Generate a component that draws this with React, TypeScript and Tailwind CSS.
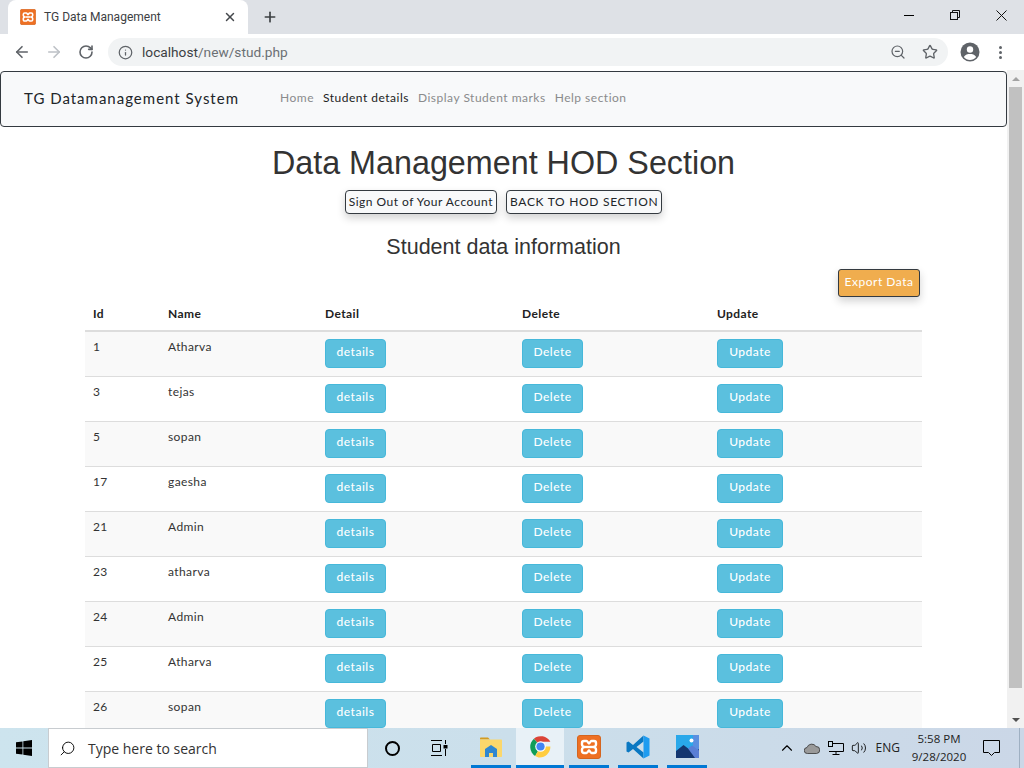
import { ArrowLeft, ArrowRight, RotateCw, Info, ZoomOut, Star, X, Plus, Search, ChevronUp, Volume2 } from 'lucide-react';

const students = [
  { id: 1, name: 'Atharva' },
  { id: 3, name: 'tejas' },
  { id: 5, name: 'sopan' },
  { id: 17, name: 'gaesha' },
  { id: 21, name: 'Admin' },
  { id: 23, name: 'atharva' },
  { id: 24, name: 'Admin' },
  { id: 25, name: 'Atharva' },
  { id: 26, name: 'sopan' },
];

function XamppIcon({ size }: { size: number }) {
  return (
    <svg width={size} height={size} viewBox="0 0 24 24" className="shrink-0">
      <rect x="0.5" y="0.5" width="23" height="23" rx="2.5" fill="#ee7023" stroke="#d4651f" strokeWidth="1" />
      <path d="M7 6h2.500c1 0 2 2.500 2.500 2.500S13.500 6 14.500 6H17c1.200 0 2 .8 2 2v1.500c0 1.500-1.500 2.500-3 2.500 1.500 0 3 1 3 2.500V16c0 1.200-.8 2-2 2h-2.500c-1 0-2-2.500-2.500-2.500S10.500 18 9.500 18H7c-1.200 0-2-.8-2-2v-1.500C5 13 6.500 12 8 12 6.500 12 5 11 5 9.500V8c0-1.200.8-2 2-2z" fill="none" stroke="#fff" strokeWidth="2.400" />
      <path d="M8 12h8" stroke="#fff" strokeWidth="2.400" />
    </svg>
  );
}

function ChromeBar() {
  return (
    <div className="h-[70px] shrink-0 flex flex-col bg-white">
      <div className="h-[34px] bg-[#dee1e6] flex items-end relative">
        <div className="ml-2 w-[240px] h-[34px] bg-white rounded-t-lg flex items-center pl-3 pr-[11px]">
          <XamppIcon size={16} />
          <span className="ml-2 text-xs text-[#3c4043] font-['Roboto',sans-serif] flex-1">TG Data Management</span>
          <X size={14} strokeWidth={2.5} className="text-[#45484c]" />
        </div>
        <Plus size={16} strokeWidth={2.5} className="ml-[14px] mb-[9px] text-[#3c4043]" />
        <div className="flex-1" />
        <div className="flex items-center h-[34px] pb-[4px]">
          <div className="w-[46px] flex justify-center"><div className="w-[10px] h-px bg-black" /></div>
          <div className="w-[46px] flex justify-center">
            <svg width="10" height="10" viewBox="0 0 10 10" fill="none" stroke="#111" strokeWidth="1">
              <rect x="0.500" y="2.500" width="7" height="7" />
              <path d="M2.500 2.500V.5h7v7H7.500" />
            </svg>
          </div>
          <div className="w-[46px] flex justify-center">
            <svg width="11" height="11" viewBox="0 0 11 11" stroke="#111" strokeWidth="1"><path d="M.5.5l10 10M10.500.5l-10 10" /></svg>
          </div>
        </div>
      </div>
      <div className="h-[36px] bg-white flex items-center">
        <ArrowLeft size={18} strokeWidth={2.2} className="ml-[13px] text-[#5f6368]" />
        <ArrowRight size={18} strokeWidth={2.2} className="ml-[14px] text-[#bdc1c6]" />
        <RotateCw size={16} strokeWidth={2.4} className="ml-[15px] text-[#5f6368]" />
        <div className="ml-[14px] w-[840px] h-[28px] bg-[#f1f3f4] rounded-full flex items-center pl-[10px] pr-[10px]">
          <Info size={15} strokeWidth={2} className="text-[#5f6368]" />
          <span className="ml-[9px] text-[13.7px] text-[#3c4043] font-['Roboto',sans-serif] flex-1">
            localhost<span className="text-[#6b6f73]">/new/stud.php</span>
          </span>
          <ZoomOut size={16} strokeWidth={1.8} className="text-[#5f6368]" />
          <Star size={16} strokeWidth={2} className="ml-[16px] text-[#5f6368]" />
        </div>
        <svg width="20" height="20" viewBox="0 0 20 20" className="ml-[12px]">
          <circle cx="10" cy="10" r="9.500" fill="#5f6368" />
          <circle cx="10" cy="7.500" r="3.200" fill="#fff" />
          <path d="M3.800 15c1.500-2.500 4-3 6.200-3s4.700.5 6.200 3c-1.500 2-3.800 3-6.200 3s-4.700-1-6.200-3z" fill="#fff" />
        </svg>
        <div className="ml-[19px] flex flex-col gap-[2px]">
          <div className="w-[3px] h-[3px] rounded-full bg-[#5f6368]" />
          <div className="w-[3px] h-[3px] rounded-full bg-[#5f6368]" />
          <div className="w-[3px] h-[3px] rounded-full bg-[#5f6368]" />
        </div>
      </div>
    </div>
  );
}

function Navbar() {
  return (
    <div className="h-[56px] mt-[1px] pb-[2px] bg-[#f8f9fa] border border-[#343a40] rounded-[4px] flex items-center pl-[23px] tracking-[0.5px]">
      <span className="text-[15px] text-[#212529] tracking-[1px]">TG Datamanagement System</span>
      <nav className="ml-[41px] flex gap-[9px] text-[12px]">
        <span className="text-[#8a8b8c]">Home</span>
        <span className="text-[#222]">Student details</span>
        <span className="text-[#8a8b8c]">Display Student marks</span>
        <span className="text-[#8a8b8c]">Help section</span>
      </nav>
    </div>
  );
}

function InfoBtn({ label, w }: { label: string; w: string }) {
  return (
    <button className={`${w} h-[29px] bg-[#5bc0de] border border-[#46b8da] rounded-[4px] text-[12px] font-medium text-white tracking-[0.5px] pb-[3px]`}>
      {label}
    </button>
  );
}

function StudentTable() {
  return (
    <table className="w-[837px] ml-[85px] table-fixed text-[12px] text-[#333] tracking-[0.4px]">
      <thead>
        <tr className="h-[32px] border-b-2 border-[#ddd] text-left font-bold">
          <th className="w-[75px] pl-2 pb-[1px] font-bold text-[#222]">Id</th>
          <th className="w-[157px] pl-2 pb-[1px] font-bold text-[#222]">Name</th>
          <th className="w-[197px] pl-2 pb-[1px] font-bold text-[#222]">Detail</th>
          <th className="w-[195px] pl-2 pb-[1px] font-bold text-[#222]">Delete</th>
          <th className="pl-2 pb-[1px] font-bold text-[#222]">Update</th>
        </tr>
      </thead>
      <tbody>
        {students.map((s, i) => (
          <tr key={i} className={`h-[45px] border-b border-[#ddd] align-top ${i % 2 === 0 ? 'bg-[#f9f9f9]' : 'bg-white'}`}>
            <td className="pl-2 pt-[6px]">{s.id}</td>
            <td className="pl-2 pt-[6px]">{s.name}</td>
            <td className="pl-2 pt-[7px]"><InfoBtn label="details" w="w-[61px]" /></td>
            <td className="pl-2 pt-[7px]"><InfoBtn label="Delete" w="w-[61px]" /></td>
            <td className="pl-2 pt-[7px]"><InfoBtn label="Update" w="w-[66px]" /></td>
          </tr>
        ))}
      </tbody>
    </table>
  );
}

function Scrollbar() {
  return (
    <div className="w-[17px] shrink-0 bg-[#f1f1f1] flex flex-col items-center">
      <div className="h-[17px] flex items-center justify-center">
        <div className="w-0 h-0 border-x-[4px] border-x-transparent border-b-[4px] border-b-[#a3a3a3]" />
      </div>
      <div className="w-[13px] h-[601px] bg-[#c1c1c1]" />
      <div className="flex-1" />
      <div className="h-[17px] flex items-center justify-center">
        <div className="w-0 h-0 border-x-[4px] border-x-transparent border-t-[4px] border-t-[#505050]" />
      </div>
    </div>
  );
}

function Taskbar() {
  const pinned = 'w-[40px] h-[40px] flex items-center justify-center border-b-[3px] border-[#0078d4]';
  return (
    <div className="h-[40px] shrink-0 flex items-stretch bg-gradient-to-r from-[#cde4ee] via-[#cbdfeb] to-[#cbd7e7] font-['Open_Sans',sans-serif]">
      <div className="w-[48px] flex items-center justify-center">
        <svg width="16" height="16" viewBox="0 0 16 16" fill="#000">
          <path d="M0 2.300l6.500-.9v6.200H0zM7.300 1.300L16 0v7.600H7.300zM0 8.400h6.500v6.200L0 13.700zM7.300 8.400H16V16l-8.700-1.200z" />
        </svg>
      </div>
      <div className="w-[320px] bg-white border border-[#c8ccd0] flex items-center pl-[10px]">
        <Search size={17} strokeWidth={1.3} className="text-black -scale-x-100" />
        <span className="ml-[12px] text-[14px] text-[#333]">Type here to search</span>
      </div>
      <div className="w-[48px] flex items-center justify-center">
        <div className="w-[15px] h-[15px] rounded-full border-[2px] border-black" />
      </div>
      <div className="w-[48px] flex items-center justify-center">
        <svg width="18" height="16" viewBox="0 0 18 16" fill="none" stroke="#000" strokeWidth="1">
          <path d="M0 .5h11M0 15.500h11M1.500 4.500h8v7h-8zM14.500 0v4M14.500 9v7" />
          <rect x="13" y="5.500" width="3" height="2.500" fill="#000" />
        </svg>
      </div>
      <div className="ml-[7px] flex">
        <div className={pinned}>
          <svg width="22" height="20" viewBox="0 0 22 20">
            <path d="M0 1.500C0 1 .4.500 1 .500h7l2 2h-10z" fill="#d39b21" />
            <path d="M0 2.500h21c.6 0 1 .4 1 1V19c0 .6-.4 1-1 1H1c-.6 0-1-.4-1-1z" fill="#fbd76b" />
            <path d="M5 12l6-4 6 4v8h-4v-4H9v4H5z" fill="#2f87d0" />
          </svg>
        </div>
        <div className="w-[48px] h-[40px] ml-[5px] flex items-center justify-center bg-[#e8f1f7] border-b-[3px] border-[#0078d4]">
          <svg width="23" height="23" viewBox="0 0 24 24">
            <path d="M12 12L5.100 3.800A11.500 11.500 0 0 1 22.300 7H12z" fill="#db4437" />
            <path d="M12 12l-5.500 10A11.500 11.500 0 0 1 5.100 3.800z" fill="#0f9d58" />
            <path d="M12 12h10.300a11.500 11.500 0 0 1-11.200 11.500H10L6.500 22z" fill="#ffcd40" />
            <circle cx="12" cy="12" r="5.500" fill="#fff" />
            <circle cx="12" cy="12" r="4.300" fill="#4285f4" />
          </svg>
        </div>
        <div className={`${pinned} ml-[5px]`}><XamppIcon size={24} /></div>
        <div className={`${pinned} ml-[9px]`}>
          <svg width="24" height="24" viewBox="0 0 24 24">
            <path d="M17.500.5L7 10 2.500 6.500.5 7.500v9l2 1L7 14l10.500 9.500v-6L10.500 12l7-5.500z" fill="#0a78c2" />
            <path d="M17.500.5l6 3v17l-6 3z" fill="#1f9cf0" />
          </svg>
        </div>
        <div className={`${pinned} ml-[9px]`}>
          <svg width="23" height="23" viewBox="0 0 23 23">
            <rect width="23" height="23" fill="#29a8ea" />
            <path d="M17 0h6v23h-6z" fill="#5a8fe0" />
            <circle cx="15.500" cy="5.500" r="2" fill="#fff" />
            <path d="M0 23V16l7.500-6L18 18l5-4v9z" fill="#14366f" />
            <path d="M12 13.500l4-3 7 5V23h-4z" fill="#5a7fd6" />
          </svg>
        </div>
      </div>
      <div className="flex-1" />
      <div className="flex items-center">
        <ChevronUp size={18} strokeWidth={1.5} className="text-black" />
        <svg width="16" height="11" viewBox="0 0 16 11" className="ml-[8px]">
          <path d="M3.500 10.500a3 3 0 0 1-.5-6A5 5 0 0 1 12 3.500a3.500 3.500 0 0 1 .5 7z" fill="#9a9a9a" stroke="#333" strokeWidth="0.8" />
        </svg>
        <svg width="16" height="14" viewBox="0 0 16 14" fill="none" stroke="#000" strokeWidth="1" className="ml-[8px]">
          <path d="M4 2.500h11.500v8H1M8 10.500v3M4.500 13.500h7" />
          <rect x="0.500" y="0.500" width="4" height="5" fill="#cbdfeb" />
        </svg>
        <Volume2 size={16} strokeWidth={1.3} className="ml-[7px] text-black" />
        <span className="ml-[9px] text-[12px] text-[#222]">ENG</span>
      </div>
      <div className="w-[72px] ml-[3px] mr-[1px] flex flex-col items-center justify-center text-[11.5px] leading-[18px] text-[#222]">
        <span>5:58 PM</span>
        <span>9/28/2020</span>
      </div>
      <div className="w-[48px] flex items-center pl-[7px] relative">
        <svg width="17" height="16" viewBox="0 0 17 16" fill="none" stroke="#000" strokeWidth="1">
          <path d="M.5.5h16v12h-5l-3 3-3-3h-5z" />
        </svg>
        <div className="absolute right-[4px] top-0 bottom-0 w-px bg-[#9fb0c2]" />
      </div>
    </div>
  );
}

export default function App() {
  return (
    <div className="w-[1024px] h-[768px] flex flex-col overflow-hidden bg-white">
      <ChromeBar />
      <div className="flex-1 min-h-0 flex">
        <div className="flex-1 min-w-0 overflow-hidden font-['Lato',sans-serif]">
          <Navbar />
          <h1 className="mt-[17px] text-center text-[32.3px] leading-[38px] text-[#333] font-['Liberation_Sans',sans-serif]">Data Management HOD Section</h1>
          <div className="mt-[8px] flex justify-center gap-[9px]">
            <button className="h-[24px] px-[3px] bg-[#f8f9fa] border border-[#343a40] rounded-[4px] text-[12px] text-[#212529] tracking-[0.5px] shadow-[0_4px_8px_rgba(0,0,0,0.18)] whitespace-nowrap">
              Sign Out of Your Account
            </button>
            <button className="h-[24px] px-[3px] bg-[#f8f9fa] border border-[#343a40] rounded-[4px] text-[12px] text-[#212529] tracking-[0.7px] shadow-[0_4px_8px_rgba(0,0,0,0.18)] whitespace-nowrap">
              BACK TO HOD SECTION
            </button>
          </div>
          <h2 className="mt-[20px] text-center text-[21.5px] leading-[26px] text-[#333] font-['Liberation_Sans',sans-serif]">Student data information</h2>
          <div className="mt-[9px] flex justify-end pr-[87px]">
            <button className="w-[82px] h-[28px] bg-[#f0ad4e] border border-[#343a40] rounded-[3px] text-[12px] text-white tracking-[0.5px] pb-[2px] shadow-[0_4px_8px_rgba(0,0,0,0.18)]">
              Export Data
            </button>
          </div>
          <div className="mt-[2px]">
            <StudentTable />
          </div>
        </div>
        <Scrollbar />
      </div>
      <Taskbar />
    </div>
  );
}
